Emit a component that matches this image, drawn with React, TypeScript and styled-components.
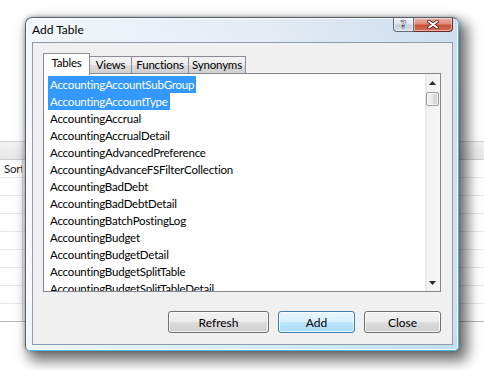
import React from "react";
import styled, { createGlobalStyle } from "styled-components";

const GlobalStyle = createGlobalStyle`
  html, body { margin: 0; padding: 0; background: #ffffff; }
  body { font-family: Lato, "Open Sans", "Liberation Sans", sans-serif; font-size: 12px; color: #000; }
  #root { width: 484px; height: 370px; overflow: hidden; }
`;

const Page = styled.div`
  position: relative;
  width: 484px;
  height: 370px;
  overflow: hidden;
  background: #ffffff;
`;

/* ---------- background: query designer grid ---------- */
const Designer = styled.div`
  padding-top: 141px;
  display: flex;
  flex-direction: column;
`;

const GridHeader = styled.div`
  height: 17px;
  border-top: 1px solid #d2d2d2;
  border-bottom: 1px solid #cdcdcd;
  background: linear-gradient(#f3f3f3, #e6e6e6);
`;

const GridRow = styled.div<{ $last?: boolean }>`
  height: 17px;
  border-bottom: 1px solid ${(p) => (p.$last ? "#b9b9b9" : "#e8e8e8")};
  display: flex;
`;

const GridCell = styled.div`
  width: 18px;
  padding-left: 4px;
  border-right: 1px solid #dcdcdc;
  overflow: hidden;
  white-space: nowrap;
  line-height: 17px;
  font-size: 11.5px;
  letter-spacing: -0.2px;
  color: #1e1e1e;
`;

/* ---------- dialog window ---------- */
const Window = styled.div`
  position: absolute;
  left: 25px;
  top: 17px;
  width: 434px;
  height: 334px;
  box-sizing: border-box;
  border: 1px solid #56616d;
  border-right-color: #47b8e2;
  border-bottom-color: #47b8e2;
  border-radius: 7px 7px 5px 5px;
  background:
    linear-gradient(to right, rgba(255, 255, 255, 0.55), rgba(255, 255, 255, 0) 55%, rgba(160, 195, 228, 0.35)),
    linear-gradient(#e3ebf4, #edf1f6 35%, #eef2f6 85%, #d3ecf8);
  box-shadow: 6px 7px 13px 3px rgba(0, 0, 0, 0.55), 0 0 4px rgba(0, 0, 0, 0.3),
    inset 0 0 0 1px rgba(255, 255, 255, 0.8);
  padding: 0 5px 5px 6px;
  display: flex;
  flex-direction: column;
`;

const TitleBar = styled.div`
  height: 24px;
  display: flex;
  align-items: flex-start;
`;

const Title = styled.div`
  flex: 1;
  height: 23px;
  display: flex;
  align-items: center;
  font-size: 12px;
  color: #000;
`;

const CaptionButtons = styled.div`
  display: flex;
`;

const CaptionButton = styled.div<{ $close?: boolean }>`
  width: ${(p) => (p.$close ? 39 : 21)}px;
  height: 14px;
  box-sizing: border-box;
  border: 1px solid ${(p) => (p.$close ? "#6e2a20" : "#5f6c7b")};
  border-top: none;
  border-left: ${(p) => (p.$close ? "none" : undefined)};
  border-radius: ${(p) => (p.$close ? "0 0 4px 0" : "0 0 0 4px")};
  background: ${(p) =>
    p.$close
      ? "linear-gradient(#eab3a8, #dc8b7c 45%, #c8503b 55%, #d2705c)"
      : "linear-gradient(#f2f5f9, #dfe6ee 45%, #c5d0dc 55%, #d6dee8)"};
  box-shadow: inset 0 0 0 1px rgba(255, 255, 255, 0.45);
  display: flex;
  align-items: center;
  justify-content: center;
`;

const HelpGlyph = styled.span`
  font-family: "DejaVu Sans", sans-serif;
  font-weight: bold;
  font-size: 11px;
  line-height: 12px;
  color: #ffffff;
  -webkit-text-stroke: 0.6px #4c5663;
`;

const Client = styled.div`
  flex: 1;
  box-sizing: border-box;
  border: 1px solid #8d9bad;
  background: #f0f0f0;
  padding: 10px 11px 11px 10px;
  display: flex;
  flex-direction: column;
  font-size: 11.5px;
  letter-spacing: -0.2px;
`;

/* ---------- tabs ---------- */
const TabStrip = styled.div`
  height: 21px;
  display: flex;
  align-items: flex-end;
  position: relative;
  z-index: 1;
`;

const Tab = styled.div<{ $active?: boolean; $w: number }>`
  width: ${(p) => p.$w}px;
  height: ${(p) => (p.$active ? 22 : 18)}px;
  box-sizing: border-box;
  border: 1px solid #898c95;
  border-bottom: ${(p) => (p.$active ? "none" : "1px solid #898c95")};
  margin-right: -1px;
  background: ${(p) => (p.$active ? "#ffffff" : "linear-gradient(#f3f3f3, #ebebeb 50%, #dddddd 50%, #cfcfcf)")};
  display: flex;
  align-items: center;
  justify-content: center;
  padding-bottom: ${(p) => (p.$active ? 4 : 2)}px;
  margin-bottom: ${(p) => (p.$active ? -1 : 0)}px;
  white-space: nowrap;
  color: #000;
  position: relative;
  z-index: ${(p) => (p.$active ? 2 : 1)};
`;

/* ---------- list ---------- */
const ListBox = styled.div`
  height: 219px;
  margin-top: -1px;
  box-sizing: border-box;
  border: 1px solid #828790;
  background: #ffffff;
  display: flex;
`;

const Items = styled.div`
  flex: 1;
  overflow: hidden;
  padding: 2px 0 0 4px;
  display: flex;
  flex-direction: column;
  align-items: flex-start;
`;

const Item = styled.div<{ $selected?: boolean }>`
  height: 17px;
  line-height: 17px;
  padding: 0 2px;
  white-space: nowrap;
  flex-shrink: 0;
  background: ${(p) => (p.$selected ? "#3399ff" : "transparent")};
  color: ${(p) => (p.$selected ? "#ffffff" : "#000000")};
`;

const ScrollBar = styled.div`
  width: 15px;
  background: linear-gradient(to right, #e3e3e3, #f2f2f2 2px, #f6f6f6);
  display: flex;
  flex-direction: column;
`;

const ArrowButton = styled.div`
  height: 17px;
  display: flex;
  align-items: center;
  justify-content: center;
`;

const Thumb = styled.div`
  height: 14px;
  margin: 1px 1px 0 1px;
  box-sizing: border-box;
  border: 1px solid #9b9b9b;
  border-radius: 2px;
  background: linear-gradient(to right, #f4f4f4, #e9e9e9 50%, #dcdcdc 50%, #d4d4d4);
  box-shadow: inset 0 0 0 1px rgba(255, 255, 255, 0.7);
`;

const Track = styled.div`
  flex: 1;
`;

/* ---------- buttons ---------- */
const ButtonRow = styled.div`
  margin-top: 19px;
  display: flex;
  justify-content: flex-end;
  gap: 9px;
`;

const Button = styled.div<{ $primary?: boolean; $w: number }>`
  width: ${(p) => p.$w}px;
  height: 22px;
  box-sizing: border-box;
  border: 1px solid ${(p) => (p.$primary ? "#3c7fb1" : "#707070")};
  border-radius: 3px;
  background: ${(p) =>
    p.$primary
      ? "linear-gradient(#eaf6fd, #d9f0fc 50%, #bee6fd 50%, #a7d9f5)"
      : "linear-gradient(#f2f2f2, #ebebeb 50%, #dddddd 50%, #cfcfcf)"};
  box-shadow: inset 0 0 0 1px rgba(255, 255, 255, 0.75);
  display: flex;
  align-items: center;
  justify-content: center;
  font-size: 12px;
  letter-spacing: 0;
  color: #000;
`;

const items = [
  "AccountingAccountSubGroup",
  "AccountingAccountType",
  "AccountingAccrual",
  "AccountingAccrualDetail",
  "AccountingAdvancedPreference",
  "AccountingAdvanceFSFilterCollection",
  "AccountingBadDebt",
  "AccountingBadDebtDetail",
  "AccountingBatchPostingLog",
  "AccountingBudget",
  "AccountingBudgetDetail",
  "AccountingBudgetSplitTable",
  "AccountingBudgetSplitTableDetail",
];

const tabs: { label: string; w: number; active?: boolean }[] = [
  { label: "Tables", w: 47, active: true },
  { label: "Views", w: 43 },
  { label: "Functions", w: 58 },
  { label: "Synonyms", w: 58 },
];

export default function App() {
  return (
    <Page>
      <GlobalStyle />
      <Designer>
        <GridHeader />
        <GridRow>
          <GridCell>Sort Type</GridCell>
        </GridRow>
        {Array.from({ length: 7 }).map((_, i) => (
          <GridRow key={i}>
            <GridCell />
          </GridRow>
        ))}
        <GridRow $last>
          <GridCell />
        </GridRow>
      </Designer>

      <Window>
        <TitleBar>
          <Title>Add Table</Title>
          <CaptionButtons>
            <CaptionButton>
              <HelpGlyph>?</HelpGlyph>
            </CaptionButton>
            <CaptionButton $close>
              <svg width="12" height="9" viewBox="0 0 12 9">
                <path d="M2 1.5 L10 7.5 M10 1.5 L2 7.5" stroke="#5a1d14" strokeWidth="3.6" strokeLinecap="round" />
                <path d="M2 1.5 L10 7.5 M10 1.5 L2 7.5" stroke="#ffffff" strokeWidth="2" strokeLinecap="round" />
              </svg>
            </CaptionButton>
          </CaptionButtons>
        </TitleBar>
        <Client>
          <TabStrip>
            {tabs.map((t) => (
              <Tab key={t.label} $w={t.w} $active={t.active}>
                {t.label}
              </Tab>
            ))}
          </TabStrip>
          <ListBox>
            <Items>
              {items.map((name, i) => (
                <Item key={name} $selected={i < 2}>
                  {name}
                </Item>
              ))}
            </Items>
            <ScrollBar>
              <ArrowButton>
                <svg width="7" height="4" viewBox="0 0 7 4">
                  <path d="M0 4 L3.5 0 L7 4 Z" fill="#2a2a2a" />
                </svg>
              </ArrowButton>
              <Thumb />
              <Track />
              <ArrowButton>
                <svg width="7" height="4" viewBox="0 0 7 4">
                  <path d="M0 0 L3.5 4 L7 0 Z" fill="#2a2a2a" />
                </svg>
              </ArrowButton>
            </ScrollBar>
          </ListBox>
          <ButtonRow>
            <Button $w={101}>Refresh</Button>
            <Button $w={77} $primary>
              Add
            </Button>
            <Button $w={77}>Close</Button>
          </ButtonRow>
        </Client>
      </Window>
    </Page>
  );
}
